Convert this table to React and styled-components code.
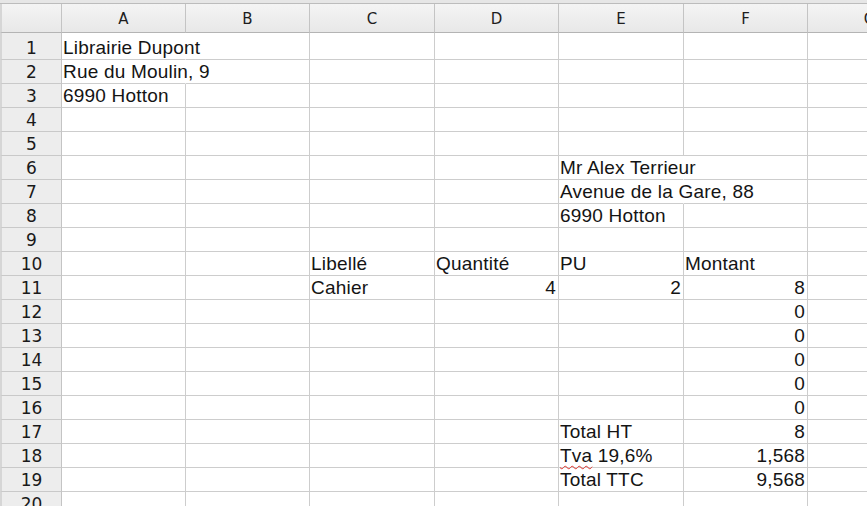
import React from "react";
import styled, { createGlobalStyle } from "styled-components";

const GlobalStyle = createGlobalStyle`
  html, body {
    margin: 0;
    padding: 0;
    background: #ffffff;
    overflow: hidden;
  }
`;

const COLS = [
  { key: "A", width: 124 },
  { key: "B", width: 124 },
  { key: "C", width: 125 },
  { key: "D", width: 124 },
  { key: "E", width: 125 },
  { key: "F", width: 124 },
  { key: "G", width: 124 },
];

const ROW_COUNT = 20;

// cell contents: row -> column -> { text, align, spill, spell }
const DATA = {
  1: { A: { text: "Librairie Dupont", spill: true } },
  2: { A: { text: "Rue du Moulin, 9", spill: true } },
  3: { A: { text: "6990 Hotton" } },
  6: { E: { text: "Mr Alex Terrieur", spill: true } },
  7: { E: { text: "Avenue de la Gare, 88", spill: true } },
  8: { E: { text: "6990 Hotton" } },
  10: {
    C: { text: "Libellé" },
    D: { text: "Quantité" },
    E: { text: "PU" },
    F: { text: "Montant" },
  },
  11: {
    C: { text: "Cahier" },
    D: { text: "4", align: "right" },
    E: { text: "2", align: "right" },
    F: { text: "8", align: "right" },
  },
  12: { F: { text: "0", align: "right" } },
  13: { F: { text: "0", align: "right" } },
  14: { F: { text: "0", align: "right" } },
  15: { F: { text: "0", align: "right" } },
  16: { F: { text: "0", align: "right" } },
  17: {
    E: { text: "Total HT" },
    F: { text: "8", align: "right" },
  },
  18: {
    E: { text: "Tva 19,6%", spell: "Tva" },
    F: { text: "1,568", align: "right" },
  },
  19: {
    E: { text: "Total TTC" },
    F: { text: "9,568", align: "right" },
  },
};

const Page = styled.div`
  width: 867px;
  height: 506px;
  overflow: hidden;
  background: #ffffff;
`;

const TopStrip = styled.div`
  height: 3px;
  background: #e6e6e6;
  border-bottom: 1px solid #bcbcbc;
`;

const Sheet = styled.div`
  display: grid;
  grid-template-columns: 62px ${COLS.map((c) => c.width + "px").join(" ")};
  grid-template-rows: 29px 27px repeat(${ROW_COUNT - 1}, 24px);
`;

const Corner = styled.div`
  box-sizing: border-box;
  background: linear-gradient(#f4f4f4, #e8e8e8);
  border-left: 2px solid #d6d6d6;
  border-right: 1px solid #c4c4c4;
  border-bottom: 1px solid #b4b4b4;
`;

const ColHead = styled.div`
  box-sizing: border-box;
  display: flex;
  align-items: center;
  justify-content: center;
  background: linear-gradient(#f4f4f4, #e8e8e8);
  border-right: 1px solid #c4c4c4;
  border-bottom: 1px solid #b4b4b4;
  font-family: "DejaVu Sans", Verdana, sans-serif;
  font-size: 15px;
  color: #1e1e1e;
  padding-top: 1px;
  white-space: nowrap;
`;

const RowHead = styled.div`
  box-sizing: border-box;
  display: flex;
  align-items: flex-end;
  justify-content: center;
  background: #ededed;
  border-left: 2px solid #d6d6d6;
  border-right: 1px solid #c4c4c4;
  border-bottom: 1px solid #c9c9c9;
  font-family: "DejaVu Sans", Verdana, sans-serif;
  font-size: 17px;
  line-height: 20px;
  color: #1a1a1a;
  padding-bottom: 1px;
`;

const Cell = styled.div`
  box-sizing: border-box;
  display: flex;
  align-items: flex-end;
  justify-content: ${(p) => (p.$align === "right" ? "flex-end" : "flex-start")};
  padding: 0 2px 1px 1px;
  border-right: 1px solid ${(p) => (p.$spill ? "transparent" : "#cdcdcd")};
  border-bottom: 1px solid #cdcdcd;
  font-family: "Liberation Sans", Arial, sans-serif;
  font-size: 19px;
  letter-spacing: 0.2px;
  line-height: 20px;
  color: #141414;
  white-space: nowrap;
  overflow: visible;
  position: relative;
  z-index: ${(p) => (p.$spill ? 1 : 0)};
`;

const Spell = styled.span`
  text-decoration: underline wavy #e0332b;
  text-decoration-thickness: 1px;
  text-underline-offset: 3px;
`;

function CellText({ item }) {
  if (!item) return null;
  if (item.spell) {
    const rest = item.text.slice(item.spell.length);
    return (
      <span>
        <Spell>{item.spell}</Spell>
        {rest}
      </span>
    );
  }
  return <span>{item.text}</span>;
}

export default function App() {
  const rows = Array.from({ length: ROW_COUNT }, (_, i) => i + 1);

  return (
    <Page>
      <GlobalStyle />
      <TopStrip />
      <Sheet>
        <Corner />
        {COLS.map((c) => (
          <ColHead key={c.key}>{c.key}</ColHead>
        ))}
        {rows.map((r) => (
          <React.Fragment key={r}>
            <RowHead>{r}</RowHead>
            {COLS.map((c) => {
              const item = DATA[r] && DATA[r][c.key];
              return (
                <Cell
                  key={c.key}
                  $align={item && item.align}
                  $spill={item && item.spill}
                >
                  <CellText item={item} />
                </Cell>
              );
            })}
          </React.Fragment>
        ))}
      </Sheet>
    </Page>
  );
}
